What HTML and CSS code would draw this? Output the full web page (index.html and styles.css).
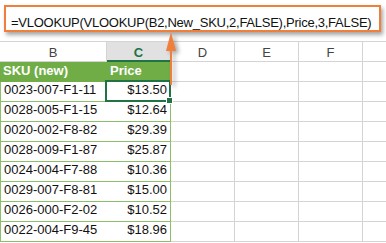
FILE: index.html
```html
<!DOCTYPE html>
<html>
<head>
<meta charset="utf-8">
<link rel="stylesheet" href="styles.css">
</head>
<body>
<div class="formula-area">
  <div class="formula-box">=VLOOKUP(VLOOKUP(B2,New_SKU,2,FALSE),Price,3,FALSE)</div>
</div>
<div class="sheet">
  <div class="hd hd-b">B</div>
  <div class="hd hd-sel">C</div>
  <div class="hd">D</div>
  <div class="hd">E</div>
  <div class="hd">F</div>
  <div class="hd hd-last"></div>

  <div class="th th-b">SKU (new)</div>
  <div class="th th-c">Price</div>
  <div class="gc"></div><div class="gc"></div><div class="gc"></div><div class="gc gl"></div>

  <div class="td td-b">0023-007-F1-11</div>
  <div class="td td-c active">$13.50</div>
  <div class="gc"></div><div class="gc"></div><div class="gc"></div><div class="gc gl"></div>

  <div class="td td-b">0028-005-F1-15</div>
  <div class="td td-c">$12.64</div>
  <div class="gc"></div><div class="gc"></div><div class="gc"></div><div class="gc gl"></div>

  <div class="td td-b">0020-002-F8-82</div>
  <div class="td td-c">$29.39</div>
  <div class="gc"></div><div class="gc"></div><div class="gc"></div><div class="gc gl"></div>

  <div class="td td-b">0028-009-F1-87</div>
  <div class="td td-c">$25.87</div>
  <div class="gc"></div><div class="gc"></div><div class="gc"></div><div class="gc gl"></div>

  <div class="td td-b">0024-004-F7-88</div>
  <div class="td td-c">$10.36</div>
  <div class="gc"></div><div class="gc"></div><div class="gc"></div><div class="gc gl"></div>

  <div class="td td-b">0029-007-F8-81</div>
  <div class="td td-c">$15.00</div>
  <div class="gc"></div><div class="gc"></div><div class="gc"></div><div class="gc gl"></div>

  <div class="td td-b">0026-000-F2-02</div>
  <div class="td td-c">$10.52</div>
  <div class="gc"></div><div class="gc"></div><div class="gc"></div><div class="gc gl"></div>

  <div class="td td-b">0022-004-F9-45</div>
  <div class="td td-c">$18.96</div>
  <div class="gc"></div><div class="gc"></div><div class="gc"></div><div class="gc gl"></div>
</div>
<svg class="arrow" width="20" height="56" viewBox="0 0 20 56">
  <line x1="8" y1="12" x2="8" y2="54" stroke="#F07F3C" stroke-width="2"/>
  <polygon points="8,1 3,20 13,20" fill="#F07F3C"/>
</svg>
</body>
</html>
```

FILE: styles.css
```css
html, body {
  margin: 0;
  padding: 0;
  background: #fff;
  width: 386px;
  height: 243px;
  overflow: hidden;
}
body {
  font-family: "Liberation Sans", Arial, sans-serif;
  position: relative;
}
.formula-area {
  height: 42px;
  padding: 5px 0 0 4px;
  box-sizing: border-box;
  border-bottom: 1px solid #d4d4d4;
}
.formula-box {
  width: 377px;
  height: 27px;
  box-sizing: border-box;
  border: 2px solid #F07F3C;
  background: #fff;
  box-shadow: 2px 3px 4px rgba(0,0,0,0.35);
  font-size: 13px;
  letter-spacing: -0.25px;
  color: #111;
  padding: 9px 0 0 5px;
  line-height: 14px;
  white-space: nowrap;
}
.sheet {
  display: grid;
  grid-template-columns: 107px 64px 64px 64px 64px 23px;
  grid-auto-rows: 20px;
}
.sheet > div {
  box-sizing: border-box;
}
.hd {
  border-right: 1px solid #d4d4d4;
  border-bottom: 1px solid #d4d4d4;
  font-size: 13px;
  color: #444;
  display: flex;
  align-items: center;
  justify-content: center;
  padding-top: 2px;
}
.hd-last { border-right: none; }
.hd-sel {
  background: #e1e1e1;
  color: #217346;
  font-weight: bold;
  border-bottom: 2px solid #217346;
}
.th {
  background: #70ad47;
  color: #fff;
  font-weight: bold;
  font-size: 13px;
  display: flex;
  align-items: flex-end;
  padding: 0 0 3px 3px;
  border-bottom: 1px solid #70ad47;
}
.th-c { border-right: 1px solid #70ad47; }
.td {
  font-size: 13px;
  color: #111;
  display: flex;
  align-items: flex-end;
  padding-bottom: 4px;
  border-bottom: 1px solid #8cbf69;
}
.td-b {
  padding-left: 3px;
  border-left: 1px solid #8cbf69;
}
.td-c {
  justify-content: flex-end;
  padding-right: 3px;
  border-right: 1px solid #8cbf69;
}
.gc {
  border-right: 1px solid #d4d4d4;
  border-bottom: 1px solid #d4d4d4;
}
.gc.gl { border-right: none; }
.active {
  position: relative;
}
.active::after {
  content: "";
  position: absolute;
  left: -2px;
  top: -2px;
  right: -1px;
  bottom: -1px;
  border: 2px solid #217346;
}
.active::before {
  content: "";
  position: absolute;
  right: -3px;
  bottom: -3px;
  width: 5px;
  height: 5px;
  background: #217346;
  border: 1px solid #fff;
  z-index: 2;
}
.arrow {
  position: absolute;
  left: 163px;
  top: 31px;
  filter: drop-shadow(3px 2px 2px rgba(0,0,0,0.35));
}
```
